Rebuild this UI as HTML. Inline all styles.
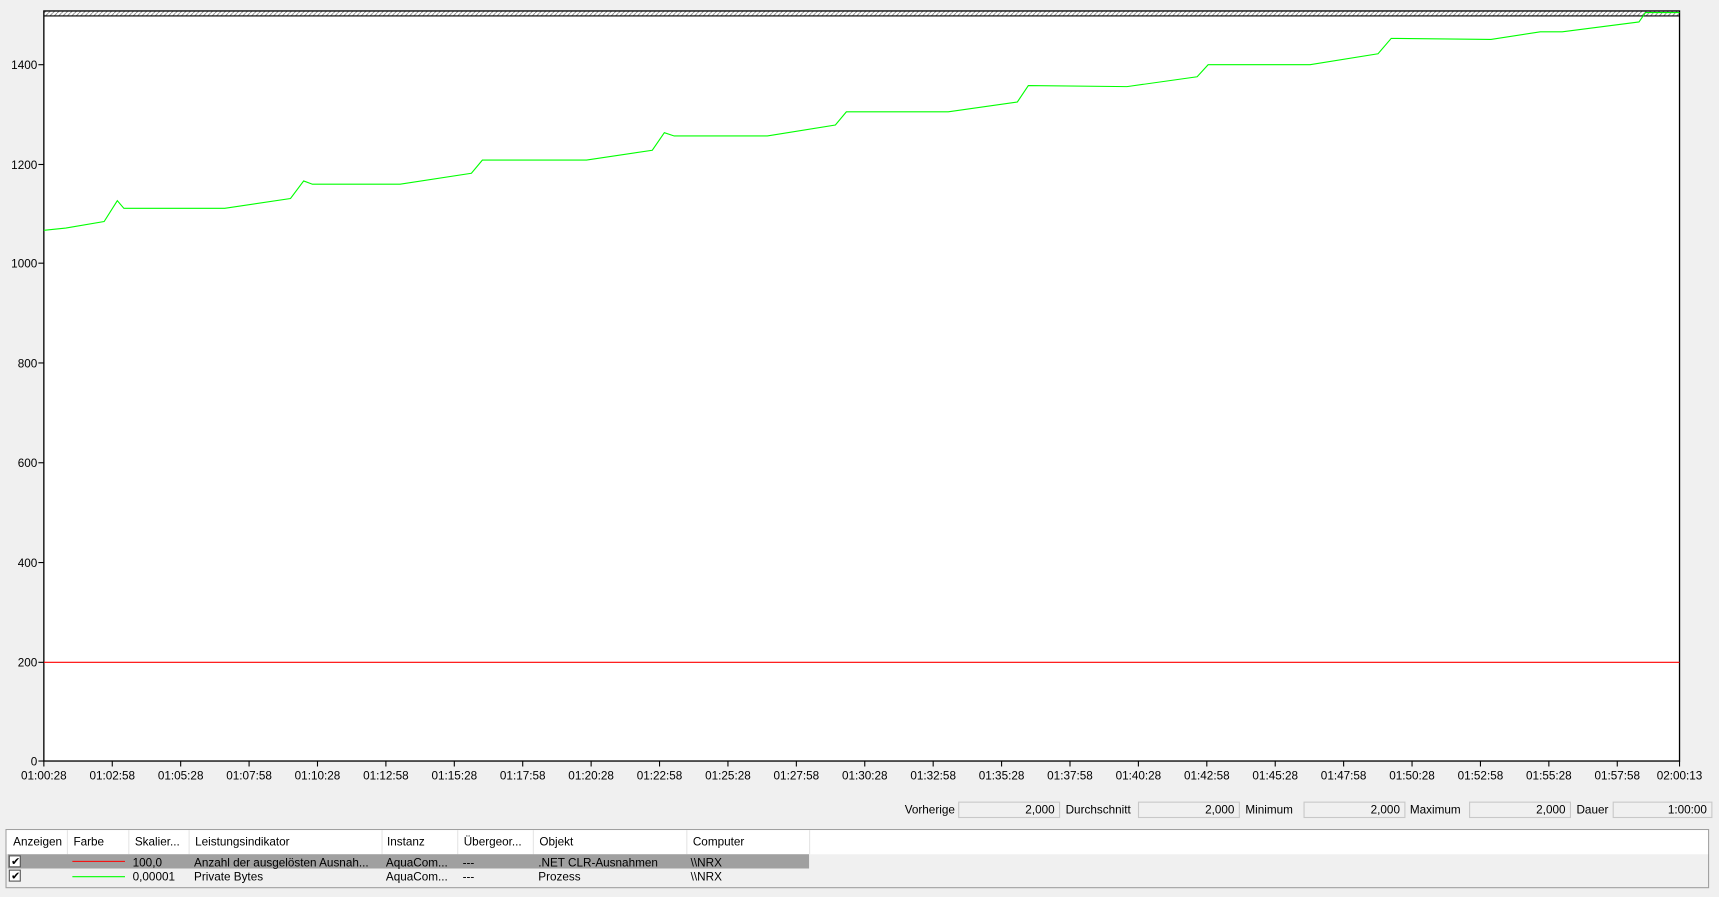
<!DOCTYPE html>
<html><head><meta charset="utf-8"><style>
html,body{margin:0;padding:0;background:#f0f0f0;overflow:hidden}
svg{display:block}
text{font-family:"Liberation Sans",sans-serif;font-size:10.7px;fill:#000}
</style></head><body>
<svg width="1719" height="897" viewBox="0 0 1568 818" preserveAspectRatio="none" xmlns="http://www.w3.org/2000/svg">
<defs><pattern id="h" width="4" height="4" patternUnits="userSpaceOnUse"><rect width="4" height="4" fill="#fff"/><path d="M0 4L4 0" stroke="#777" stroke-width="0.8"/></pattern></defs>
<rect x="0" y="0" width="1568" height="818" fill="#f0f0f0"/>
<rect x="40" y="10" width="1492" height="684" fill="#fff"/>
<rect x="40" y="10" width="1492" height="4.5" fill="url(#h)"/>
<line x1="40" y1="14.5" x2="1532" y2="14.5" stroke="#000" stroke-width="1"/>
<rect x="40" y="10" width="1492" height="684" fill="none" stroke="#000" stroke-width="1.2"/>
<line x1="40" y1="604" x2="1532" y2="604" stroke="#ff0000" stroke-width="1"/>
<polyline fill="none" stroke="#00ff00" stroke-width="1" points="40,210 60,208 95,202 107,183 113,190 205,190 265,181 277,165 285,168 365,168 430,158 440,146 535,146 595,137 606,121 615,124 700,124 762,114 772,102 865,102 928,93 938,78 1028,79 1092,70 1102,59 1195,59 1257,49 1269,35 1360,36 1405,29 1425,29 1495,20 1501,11.5 1532,11.5"/>
<g stroke="#000" stroke-width="1">
<line x1="35" y1="694" x2="40" y2="694"/><line x1="35" y1="604" x2="40" y2="604"/><line x1="35" y1="513" x2="40" y2="513"/><line x1="35" y1="422" x2="40" y2="422"/><line x1="35" y1="331" x2="40" y2="331"/><line x1="35" y1="240" x2="40" y2="240"/><line x1="35" y1="150" x2="40" y2="150"/><line x1="35" y1="59" x2="40" y2="59"/>
</g>
<g text-anchor="end">
<text x="34" y="698">0</text><text x="34" y="608">200</text><text x="34" y="517">400</text><text x="34" y="426">600</text><text x="34" y="335">800</text><text x="34" y="244">1000</text><text x="34" y="154">1200</text><text x="34" y="63">1400</text>
</g>
<g id="xt" text-anchor="middle"></g>
<script>
var labs=["01:00:28","01:02:58","01:05:28","01:07:58","01:10:28","01:12:58","01:15:28","01:17:58","01:20:28","01:22:58","01:25:28","01:27:58","01:30:28","01:32:58","01:35:28","01:37:58","01:40:28","01:42:58","01:45:28","01:47:58","01:50:28","01:52:58","01:55:28","01:57:58","02:00:13"];
var g=document.getElementById("xt"),ns="http://www.w3.org/2000/svg";
labs.forEach(function(l,i){var x=i<24?40+i*62.4:1532;
var ln=document.createElementNS(ns,"line");ln.setAttribute("x1",x);ln.setAttribute("x2",x);ln.setAttribute("y1",694);ln.setAttribute("y2",699);ln.setAttribute("stroke","#000");g.appendChild(ln);
var t=document.createElementNS(ns,"text");t.setAttribute("x",x);t.setAttribute("y",711);t.textContent=l;g.appendChild(t);});
</script>
<g>
<text x="871" y="742" text-anchor="end">Vorherige</text>
<rect x="874.5" y="731.5" width="92" height="14" fill="#f0f0f0" stroke="#c8c8c8"/><text x="962" y="742" text-anchor="end">2,000</text>
<text x="972" y="742">Durchschnitt</text>
<rect x="1038.5" y="731.5" width="92" height="14" fill="#f0f0f0" stroke="#c8c8c8"/><text x="1126" y="742" text-anchor="end">2,000</text>
<text x="1136" y="742">Minimum</text>
<rect x="1189.5" y="731.5" width="92" height="14" fill="#f0f0f0" stroke="#c8c8c8"/><text x="1277" y="742" text-anchor="end">2,000</text>
<text x="1286" y="742">Maximum</text>
<rect x="1340.5" y="731.5" width="92" height="14" fill="#f0f0f0" stroke="#c8c8c8"/><text x="1428" y="742" text-anchor="end">2,000</text>
<text x="1438" y="742">Dauer</text>
<rect x="1471.5" y="731.5" width="90" height="14" fill="#f0f0f0" stroke="#c8c8c8"/><text x="1557" y="742" text-anchor="end">1:00:00</text>
</g>
<rect x="5.5" y="756.5" width="1553" height="53" fill="#f0f0f0" stroke="#a0a0a0"/>
<rect x="6" y="757" width="1552" height="22" fill="#fff"/>
<g stroke="#e5e5e5"><line x1="61.5" y1="757" x2="61.5" y2="779"/><line x1="117.5" y1="757" x2="117.5" y2="779"/><line x1="172.5" y1="757" x2="172.5" y2="779"/><line x1="348.5" y1="757" x2="348.5" y2="779"/><line x1="417.5" y1="757" x2="417.5" y2="779"/><line x1="486.5" y1="757" x2="486.5" y2="779"/><line x1="626.5" y1="757" x2="626.5" y2="779"/><line x1="738.5" y1="757" x2="738.5" y2="779"/></g>
<text x="12" y="771">Anzeigen</text><text x="67" y="771">Farbe</text><text x="123" y="771">Skalier...</text><text x="178" y="771">Leistungsindikator</text><text x="353" y="771">Instanz</text><text x="423" y="771">Übergeor...</text><text x="492" y="771">Objekt</text><text x="632" y="771">Computer</text>
<rect x="7" y="779" width="731" height="13" fill="#a0a0a0"/>
<rect x="8.5" y="780.5" width="10" height="10" fill="#fff" stroke="#555"/><text x="10" y="789" style="font-size:10px">✔</text>
<line x1="66" y1="785.5" x2="114" y2="785.5" stroke="#ff0000"/>
<text x="121" y="790">100,0</text><text x="177" y="790">Anzahl der ausgelösten Ausnah...</text><text x="352" y="790">AquaCom...</text><text x="422" y="790">---</text><text x="491" y="790">.NET CLR-Ausnahmen</text><text x="630" y="790">\\NRX</text>
<rect x="8.5" y="793.5" width="10" height="10" fill="#fff" stroke="#555"/><text x="10" y="802" style="font-size:10px">✔</text>
<line x1="66" y1="799.5" x2="114" y2="799.5" stroke="#00ff00"/>
<text x="121" y="803">0,00001</text><text x="177" y="803">Private Bytes</text><text x="352" y="803">AquaCom...</text><text x="422" y="803">---</text><text x="491" y="803">Prozess</text><text x="630" y="803">\\NRX</text>
</svg>
</body></html>
